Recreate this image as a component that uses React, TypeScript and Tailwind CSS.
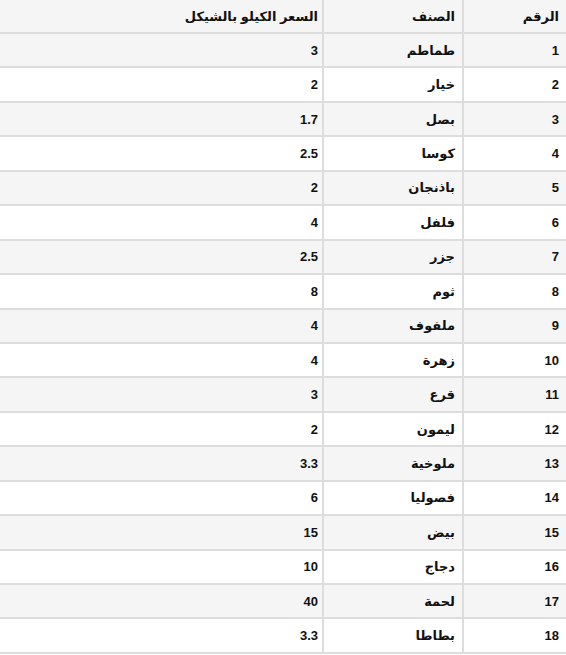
const rows: { id: number; name: string; price: string }[] = [
  { id: 1, name: "طماطم", price: "3" },
  { id: 2, name: "خيار", price: "2" },
  { id: 3, name: "بصل", price: "1.7" },
  { id: 4, name: "كوسا", price: "2.5" },
  { id: 5, name: "باذنجان", price: "2" },
  { id: 6, name: "فلفل", price: "4" },
  { id: 7, name: "جزر", price: "2.5" },
  { id: 8, name: "ثوم", price: "8" },
  { id: 9, name: "ملفوف", price: "4" },
  { id: 10, name: "زهرة", price: "4" },
  { id: 11, name: "قرع", price: "3" },
  { id: 12, name: "ليمون", price: "2" },
  { id: 13, name: "ملوخية", price: "3.3" },
  { id: 14, name: "فصوليا", price: "6" },
  { id: 15, name: "بيض", price: "15" },
  { id: 16, name: "دجاج", price: "10" },
  { id: 17, name: "لحمة", price: "40" },
  { id: 18, name: "بطاطا", price: "3.3" },
];

const App = () => {
  return (
    <div
      dir="rtl"
      className="w-[566px] bg-white text-[13px] font-bold text-[#111] leading-none"
      style={{ fontFamily: '"Liberation Sans", "DejaVu Sans", sans-serif' }}
    >
      <table className="w-full border-collapse table-fixed">
        <colgroup>
          <col className="w-[103px]" />
          <col className="w-[140px]" />
          <col />
        </colgroup>
        <thead>
          <tr className="bg-[#f5f5f5] h-[33px]">
            <th className="border-b-2 border-l-2 border-[#dddddd] pr-[7px] text-right font-bold">
              الرقم
            </th>
            <th className="border-b-2 border-l-2 border-[#dddddd] pr-[7px] text-right font-bold">
              الصنف
            </th>
            <th className="border-b-2 border-[#dddddd] pr-[4px] text-right font-bold">
              السعر الكيلو بالشيكل
            </th>
          </tr>
        </thead>
        <tbody>
          {rows.map((row, i) => (
            <tr
              key={row.id}
              className={`h-[34.44px] ${i % 2 === 0 ? "bg-[#f5f5f5]" : "bg-white"}`}
            >
              <td className="border-b-2 border-l-2 border-[#dddddd] pr-[7px] text-right">
                {row.id}
              </td>
              <td className="border-b-2 border-l-2 border-[#dddddd] pr-[7px] text-right">
                {row.name}
              </td>
              <td className="border-b-2 border-[#dddddd] pr-[4px] text-right">
                {row.price}
              </td>
            </tr>
          ))}
        </tbody>
      </table>
    </div>
  );
};

export default App;
